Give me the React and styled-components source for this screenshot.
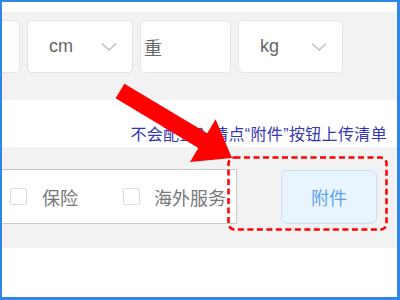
import React from 'react';
import styled, { createGlobalStyle } from 'styled-components';

const GlobalStyle = createGlobalStyle`
  * { box-sizing: border-box; }
  body {
    margin: 0;
    font-family: "Liberation Sans", "Noto Sans CJK SC", sans-serif;
  }
`;

const Frame = styled.div`
  position: relative;
  width: 400px;
  height: 300px;
  border: 2px solid #2f86e6;
  border-right-width: 3px;
  border-bottom-width: 3px;
  background: #fff;
  display: flex;
  flex-direction: column;
  overflow: hidden;
`;

const TopBand = styled.div`
  height: 10px;
  background: #fff;
`;

const InputRow = styled.div`
  display: flex;
  gap: 7px;
  padding: 8px 0 27px;
  background: #f2f2f2;
`;

const Field = styled.div`
  flex: none;
  width: ${(p) => p.$w};
  height: 53px;
  display: flex;
  align-items: center;
  justify-content: space-between;
  padding: ${(p) => (p.$cut ? '0' : `0 15px 0 ${p.$pl || '21px'}`)};
  background: #fff;
  border: 1px solid #e3e3e3;
  border-left-width: ${(p) => (p.$cut ? 0 : '1px')};
  border-radius: ${(p) => (p.$cut ? '0 5px 5px 0' : '5px')};
  font-size: 18px;
  color: #666;
`;

const Chevron = () => (
  <svg width="16" height="10" viewBox="0 0 16 10">
    <polyline points="1,1.5 8,8 15,1.5" fill="none" stroke="#c0c0c0" strokeWidth="1.5" />
  </svg>
);

const HintRow = styled.div`
  height: 47px;
  display: flex;
  justify-content: flex-end;
  align-items: flex-end;
  padding: 0 10px 4px 0;
  background: #fff;
`;

const Hint = styled.span`
  font-size: 16px;
  line-height: 16px;
  letter-spacing: 0.35px;
  color: #3636b8;
  white-space: nowrap;
`;

const ActionArea = styled.div`
  height: 101px;
  display: flex;
  align-items: flex-start;
  padding-top: 22px;
  background: #f2f2f2;
`;

const Panel = styled.div`
  width: 235px;
  height: 55px;
  display: flex;
  align-items: center;
  padding-left: 8px;
  background: #fff;
  border: 1px solid #c9c9c9;
  border-left: none;
`;

const Box = styled.span`
  width: 17px;
  height: 17px;
  border: 1px solid #dcdcdc;
  border-radius: 2px;
  background: #fff;
  margin-right: ${(p) => p.$gap};
`;

const Label = styled.span`
  font-family: "Noto Sans CJK SC", sans-serif;
  font-size: 18px;
  color: #777;
  margin-right: ${(p) => p.$after || 0};
  white-space: nowrap;
`;

const AttachButton = styled.button`
  width: 96px;
  height: 54px;
  margin: 1px 0 0 44px;
  background: #eaf4ff;
  border: 1px solid #c8e0fa;
  border-radius: 6px;
  font-family: "Noto Sans CJK SC", sans-serif;
  font-size: 18px;
  color: #5ba5f2;
  cursor: pointer;
`;

const BottomBand = styled.div`
  flex: 1;
  background: #fff;
`;

const Annotation = styled.svg`
  position: absolute;
  top: -2px;
  left: -2px;
  pointer-events: none;
`;

export default function App() {
  return (
    <>
      <GlobalStyle />
      <Frame>
        <TopBand />
        <InputRow>
          <Field $w="18px" $cut />
          <Field $w="106px">cm<Chevron /></Field>
          <Field $w="91px" $pl="3px">
            <Label style={{ color: '#666' }}>重</Label>
          </Field>
          <Field $w="105px">kg<Chevron /></Field>
        </InputRow>
        <HintRow>
          <Hint>不会配置？请点“附件”按钮上传清单</Hint>
        </HintRow>
        <ActionArea>
          <Panel>
            <Box $gap="15px" />
            <Label $after="45px">保险</Label>
            <Box $gap="14px" />
            <Label>海外服务</Label>
          </Panel>
          <AttachButton>附件</AttachButton>
        </ActionArea>
        <BottomBand />
        <Annotation width="400" height="300" viewBox="0 0 400 300">
          <polygon
            points="124.4,83.7 207.2,133.3 215.6,119.2 232,158 190,162 198.4,147.9 115.6,98.3"
            fill="#ff0000"
          />
          <rect
            x="228.5"
            y="157.5"
            width="158"
            height="72"
            rx="6"
            fill="none"
            stroke="#ff0000"
            strokeWidth="2.5"
            strokeDasharray="6 3.5"
          />
        </Annotation>
      </Frame>
    </>
  );
}
